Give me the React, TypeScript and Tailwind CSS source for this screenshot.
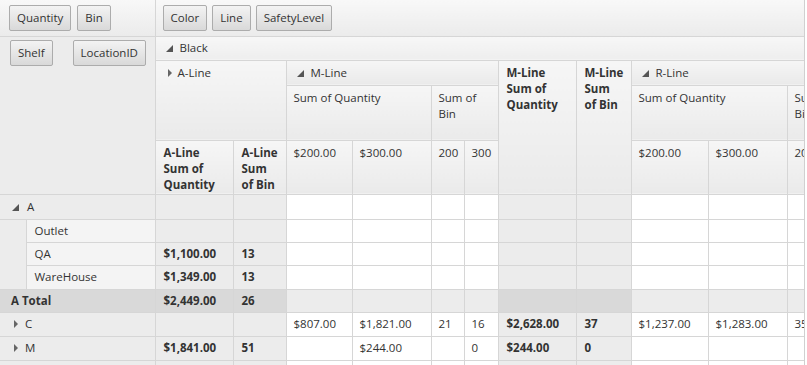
import React from "react";

const widths = [26, 129, 78, 53, 66, 79, 33, 34, 78, 55, 77, 79, 40];

const bd = "border border-[#d6d6d6]";
const hd = `${bd} bg-linear-to-b from-[#f6f6f6] to-[#eaeaea] align-top text-left font-normal px-[7px] pt-[4px] leading-4 whitespace-nowrap overflow-hidden`;
const hdBold = `${bd} bg-linear-to-b from-[#f6f6f6] to-[#eaeaea] align-top text-left font-bold px-[8px] pt-[4px] leading-4 whitespace-nowrap overflow-hidden`;

function Expanded({ cls = "" }: { cls?: string }) {
	return (
		<svg width="7" height="7" viewBox="0 0 7 7" className={`inline-block align-baseline ${cls}`}>
			<path d="M7 0V7H0Z" fill="#555" />
		</svg>
	);
}

function Collapsed({ cls = "" }: { cls?: string }) {
	return (
		<svg width="7" height="8" viewBox="0 0 7 8" className={`inline-block align-baseline ${cls}`}>
			<path d="M2 0L6 4L2 8Z" fill="#666" />
		</svg>
	);
}

function FieldButton({ label, className = "" }: { label: string; className?: string }) {
	return (
		<div
			className={`h-[26px] shrink-0 px-[7px] flex items-center border border-[#acacac] rounded-[2px] bg-linear-to-b from-[#f3f3f3] to-[#d9d9d9] text-[11.5px] text-[#333] ${className}`}
		>
			{label}
		</div>
	);
}

type Cell = { v?: string; bold?: boolean; bg: string };

function DataCell({ c, pl = "pl-[7px]" }: { c: Cell; pl?: string }) {
	return (
		<td className={`${bd} ${c.bg} ${pl} pr-1 whitespace-nowrap overflow-hidden ${c.bold ? "font-bold" : ""}`}>
			{c.v ?? ""}
		</td>
	);
}

const W = "bg-white";
const G = "bg-[#ececec]";
const D = "bg-[#d9d9d9]";

const fill = (arr: (string | undefined)[], n: number) => Array.from({ length: n }, (_, i) => arr[i]);

function valueCells(
	a: (string | undefined)[],
	m: (string | undefined)[],
	mt: (string | undefined)[],
	r: (string | undefined)[],
	total = false
) {
	const aBg = total ? D : G;
	const detBg = total ? G : W;
	const mtBg = total ? D : G;
	const av = fill(a, 2);
	const mtv = fill(mt, 2);
	return (
		<>
			<DataCell c={{ v: av[0], bold: true, bg: aBg }} pl="pl-[8px]" />
			<DataCell c={{ v: av[1], bold: true, bg: aBg }} pl="pl-[8px]" />
			{fill(m, 4).map((v, i) => (
				<DataCell key={"m" + i} c={{ v, bg: detBg }} />
			))}
			<DataCell c={{ v: mtv[0], bold: true, bg: mtBg }} pl="pl-[8px]" />
			<DataCell c={{ v: mtv[1], bold: true, bg: mtBg }} pl="pl-[8px]" />
			{fill(r, 3).map((v, i) => (
				<DataCell key={"r" + i} c={{ v, bg: detBg }} />
			))}
		</>
	);
}

export default function App() {
	return (
		<div
			className="w-[807px] h-[365px] bg-white overflow-hidden text-[11.5px] text-[#333]"
			style={{ fontFamily: '"Segoe UI", "Open Sans", "Noto Sans", sans-serif' }}
		>
			<div className="w-[805px] h-[365px] overflow-hidden border-r border-[#d0d0d0]">
				<table className="table-fixed border-collapse" style={{ width: 827 }}>
					<colgroup>
						{widths.map((w, i) => (
							<col key={i} style={{ width: w }} />
						))}
					</colgroup>
					<tbody>
						<tr className="h-[36px]">
							<td colSpan={2} className={`${bd} border-t-0 border-l-0 bg-linear-to-b from-[#f8f8f8] to-[#ebebeb] align-top pt-[5px] pl-[9px]`}>
								<div className="flex gap-[6px]">
									<FieldButton label="Quantity" />
									<FieldButton label="Bin" />
								</div>
							</td>
							<td colSpan={11} className={`${bd} border-t-0 border-r-0 bg-linear-to-b from-[#f8f8f8] to-[#ebebeb] align-top pt-[5px] pl-[7px]`}>
								<div className="flex gap-[5px]">
									<FieldButton label="Color" />
									<FieldButton label="Line" />
									<FieldButton label="SafetyLevel" />
								</div>
							</td>
						</tr>
						<tr className="h-[24px]">
							<td colSpan={2} rowSpan={4} className={`${bd} border-l-0 ${G} align-top pt-[3px] pl-[10px]`}>
								<div className="flex">
									<FieldButton label="Shelf" />
									<FieldButton label="LocationID" className="ml-[20px]" />
								</div>
							</td>
							<td colSpan={11} className={`${bd} border-r-0 bg-linear-to-b from-[#f7f7f7] to-[#eeeeee] pl-[10px] whitespace-nowrap`}>
								<Expanded cls="mr-[7px]" />
								Black
							</td>
						</tr>
						<tr className="h-[25px]">
							<th colSpan={2} rowSpan={2} className={`${hd} pl-[10px] pt-[4px]`}>
								<Collapsed cls="mr-[5px]" />
								A-Line
							</th>
							<th colSpan={4} className={`${hd} pl-[10px]`}>
								<Expanded cls="mr-[7px]" />
								M-Line
							</th>
							<th rowSpan={3} className={hdBold}>
								M-Line
								<br />
								Sum of
								<br />
								Quantity
							</th>
							<th rowSpan={3} className={hdBold}>
								M-Line
								<br />
								Sum
								<br />
								of Bin
							</th>
							<th colSpan={3} className={`${hd} pl-[10px]`}>
								<Expanded cls="mr-[7px]" />
								R-Line
							</th>
						</tr>
						<tr className="h-[55px]">
							<th colSpan={2} className={hd}>
								Sum of Quantity
							</th>
							<th colSpan={2} className={hd}>
								Sum of
								<br />
								Bin
							</th>
							<th colSpan={2} className={hd}>
								Sum of Quantity
							</th>
							<th className={hd}>
								Sum of
								<br />
								Bin
							</th>
						</tr>
						<tr className="h-[54px]">
							<th className={hdBold}>
								A-Line
								<br />
								Sum of
								<br />
								Quantity
							</th>
							<th className={hdBold}>
								A-Line
								<br />
								Sum
								<br />
								of Bin
							</th>
							<th className={hd}>$200.00</th>
							<th className={hd}>$300.00</th>
							<th className={hd}>200</th>
							<th className={hd}>300</th>
							<th className={hd}>$200.00</th>
							<th className={hd}>$300.00</th>
							<th className={hd}>200</th>
						</tr>

						<tr className="h-[25px]">
							<td colSpan={2} className={`${bd} border-l-0 ${G} pl-[12px] whitespace-nowrap`}>
								<Expanded cls="mr-[8px]" />A
							</td>
							{valueCells([], [], [], [])}
						</tr>
						<tr className="h-[23px]">
							<td rowSpan={3} className={`${G} border-b border-[#d6d6d6]`} />
							<td className={`${bd} bg-[#f4f4f4] pl-[8px]`}>Outlet</td>
							{valueCells([], [], [], [])}
						</tr>
						<tr className="h-[23px]">
							<td className={`${bd} bg-[#f4f4f4] pl-[8px]`}>QA</td>
							{valueCells(["$1,100.00", "13"], [], [], [])}
						</tr>
						<tr className="h-[24px]">
							<td className={`${bd} bg-[#f4f4f4] pl-[8px]`}>WareHouse</td>
							{valueCells(["$1,349.00", "13"], [], [], [])}
						</tr>
						<tr className="h-[23px]">
							<td colSpan={2} className={`${bd} border-l-0 ${D} pl-[11px] font-bold`}>
								A Total
							</td>
							{valueCells(["$2,449.00", "26"], [], [], [], true)}
						</tr>
						<tr className="h-[24px]">
							<td colSpan={2} className={`${bd} border-l-0 ${G} pl-[12px] whitespace-nowrap`}>
								<Collapsed cls="mr-[6px]" />C
							</td>
							{valueCells(
								[],
								["$807.00", "$1,821.00", "21", "16"],
								["$2,628.00", "37"],
								["$1,237.00", "$1,283.00", "35"]
							)}
						</tr>
						<tr className="h-[24px]">
							<td colSpan={2} className={`${bd} border-l-0 ${G} pl-[12px] whitespace-nowrap`}>
								<Collapsed cls="mr-[6px]" />M
							</td>
							{valueCells(
								["$1,841.00", "51"],
								[undefined, "$244.00", undefined, "0"],
								["$244.00", "0"],
								[]
							)}
						</tr>
						<tr className="h-[24px]">
							<td colSpan={2} className={`${bd} border-l-0 ${G}`} />
							{valueCells([], [], [], [])}
						</tr>
					</tbody>
				</table>
			</div>
		</div>
	);
}
